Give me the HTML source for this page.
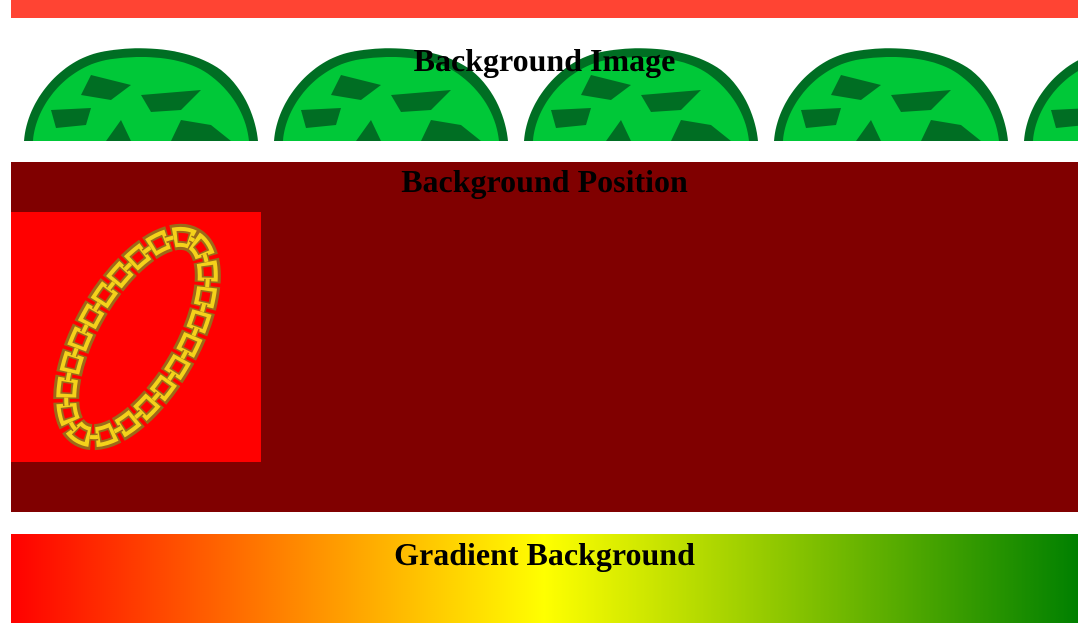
<!DOCTYPE html>
<html><head><style>
body{margin:0;width:1089px;height:623px;overflow:hidden;background:#fff;position:relative;font-family:"Liberation Serif",serif}
.a{position:absolute;left:11px;width:1067px}
h2{margin:0;font-size:32px;font-weight:bold;text-align:center;position:absolute;left:0;right:0;color:#000}
</style></head><body>
<div class="a" style="top:0;height:18px;background:#ff4433"></div>
<div class="a" style="top:40px;height:101px;overflow:hidden">
<svg width="1067" height="101">
<defs>
<pattern id="m" width="250" height="101" patternUnits="userSpaceOnUse">
<path d="M13,101 C16,60 50,20 90,12 C130,4 180,8 210,30 C235,50 245,80 247,101 Z" fill="#006e23"/>
<path d="M22,101 C25,65 55,28 95,20 C130,14 175,16 200,36 C225,55 236,80 238,101 Z" fill="#00c838"/>
<path d="M80,35 L120,45 L100,60 L70,55 Z M130,55 L190,50 L170,70 L140,72 Z M40,70 L80,68 L75,85 L45,88 Z M110,80 L120,101 L95,101 Z M170,80 L200,85 L220,101 L160,101 Z" fill="#006e23"/>
</pattern>
</defs>
<rect width="1067" height="101" fill="url(#m)"/>
</svg>
<h2 style="top:2px">Background Image</h2>
</div>
<div class="a" style="top:162px;height:350px;background:#800000">
<h2 style="top:1px">Background Position</h2>
<div style="position:absolute;left:0;top:50px;width:250px;height:250px;background:#f00">
<svg width="250" height="250">
<g transform="translate(126,125) rotate(-60)">
<ellipse rx="112" ry="50" fill="none" stroke="#9b6a1a" stroke-width="26" stroke-dasharray="22 3.3"/>
<ellipse rx="112" ry="50" fill="none" stroke="#f5d21a" stroke-width="20" stroke-dasharray="19 6.3" stroke-dashoffset="-1.5"/>
<ellipse rx="112" ry="50" fill="none" stroke="#9b6a1a" stroke-width="12" stroke-dasharray="12 13.3" stroke-dashoffset="-5"/>
<ellipse rx="112" ry="50" fill="none" stroke="#f00" stroke-width="8" stroke-dasharray="9 16.3" stroke-dashoffset="-6.5"/>
<ellipse rx="112" ry="50" fill="none" stroke="#9b6a1a" stroke-width="7" stroke-dasharray="8 17.3" stroke-dashoffset="-18.5"/>
<ellipse rx="112" ry="50" fill="none" stroke="#f5d21a" stroke-width="4" stroke-dasharray="8 17.3" stroke-dashoffset="-18.5"/>
</g>
</svg>
</div>
</div>
<div class="a" style="top:534px;height:89px;background:linear-gradient(to right,#f00,#ff0,#008000)">
<h2 style="top:2px">Gradient Background</h2>
</div>
</body></html>
